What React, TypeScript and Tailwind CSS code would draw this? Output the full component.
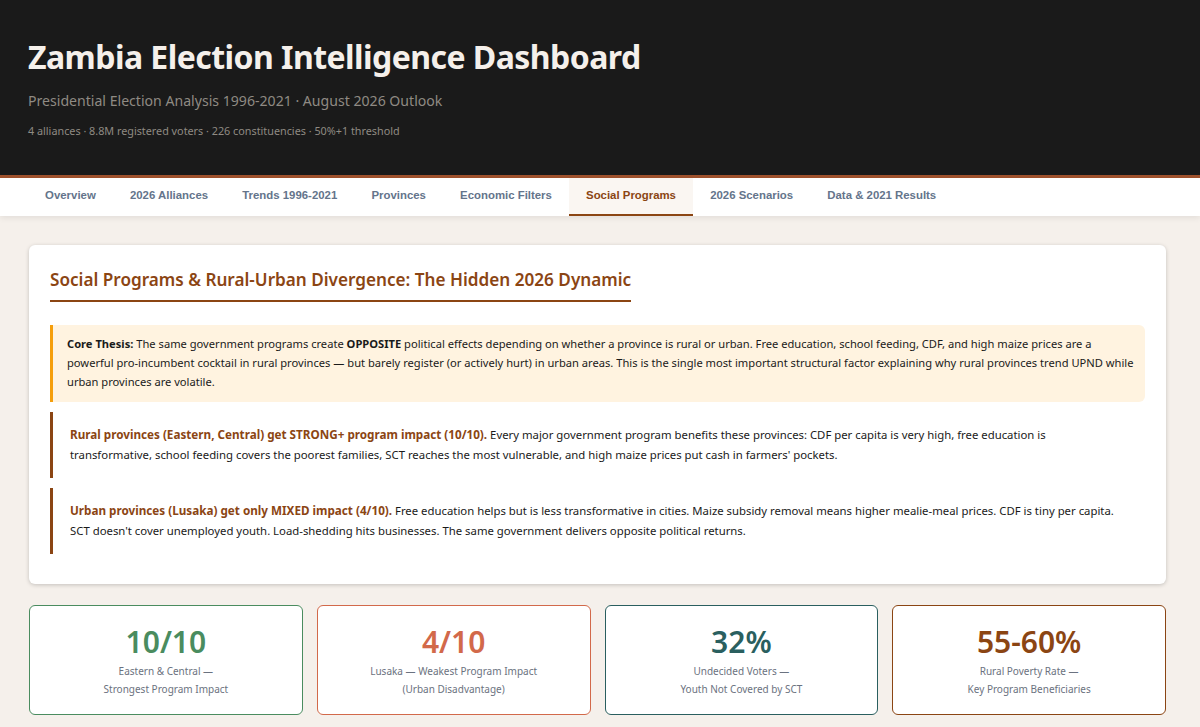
const tabs = [
  "Overview",
  "2026 Alliances",
  "Trends 1996-2021",
  "Provinces",
  "Economic Filters",
  "Social Programs",
  "2026 Scenarios",
  "Data & 2021 Results",
];

const stats = [
  { value: "10/10", lines: ["Eastern & Central —", "Strongest Program Impact"], box: "border-[#4a8c5f]", text: "text-[#4a8c5f]" },
  { value: "4/10", lines: ["Lusaka — Weakest Program Impact", "(Urban Disadvantage)"], box: "border-[#d2694a]", text: "text-[#d2694a]" },
  { value: "32%", lines: ["Undecided Voters —", "Youth Not Covered by SCT"], box: "border-[#2a5f5f]", text: "text-[#2a5f5f]" },
  { value: "55-60%", lines: ["Rural Poverty Rate —", "Key Program Beneficiaries"], box: "border-[#8b4513]", text: "text-[#8b4513]" },
];

export default function App() {
  return (
    <div className="h-[727px] overflow-hidden bg-[#f5f0eb] font-['Noto_Sans',sans-serif] text-[#1a1a1a]">
      <header className="h-[178px] border-b-[3px] border-[#a0522d] bg-[#1a1a1a] px-[28px] pt-[37px]">
        <h1 className="text-[32px] leading-[40px] font-bold tracking-[-0.55px] text-[#f5f0eb]">
          Zambia Election Intelligence Dashboard
        </h1>
        <p className="mt-[14px] text-[14.1px] leading-[20px] text-[#8f8a83]">
          Presidential Election Analysis 1996-2021 · August 2026 Outlook
        </p>
        <p className="mt-[12px] text-[10.8px] leading-[16px] text-[#8f8a83]">
          4 alliances · 8.8M registered voters · 226 constituencies · 50%+1 threshold
        </p>
      </header>

      <nav className="flex h-[38px] bg-white px-[28px] shadow-[0_2px_6px_rgba(0,0,0,0.08)]">
        {tabs.map((tab) => (
          <button
            key={tab}
            className={
              tab === "Social Programs"
                ? "border-b-[2px] border-[#8b4513] bg-[#faf6f2] px-[17.1px] font-['Liberation_Sans',sans-serif] text-[11.4px] font-bold text-[#8b4513]"
                : "border-b-[2px] border-transparent px-[17.1px] font-['Liberation_Sans',sans-serif] text-[11.4px] font-bold text-[#64748b]"
            }
          >
            {tab}
          </button>
        ))}
      </nav>

      <main className="pt-[29px] pr-[34px] pl-[29px]">
        <section className="h-[339px] rounded-[6px] bg-white px-[21px] pt-[22px] shadow-[0_1px_4px_rgba(0,0,0,0.2)]">
          <h2 className="inline-block border-b-[2px] border-[#8b4513] pb-[7px] text-[17.15px] leading-[26px] font-semibold text-[#8b4513]">
            Social Programs &amp; Rural-Urban Divergence: The Hidden 2026 Dynamic
          </h2>

          <div className="mt-[23px] rounded-r-[6px] border-l-[3px] border-[#f59e0b] bg-[#fff3e0] pt-[8.6px] pr-[8px] pb-[10.6px] pl-[14px] text-[11.15px] leading-[19.2px]">
            <strong>Core Thesis:</strong> The same government programs create <strong>OPPOSITE</strong> political effects
            depending on whether a province is rural or urban. Free education, school feeding, CDF, and high maize prices
            are a powerful pro-incumbent cocktail in rural provinces — but barely register (or actively hurt) in urban
            areas. This is the single most important structural factor explaining why rural provinces trend UPND while
            urban provinces are volatile.
          </div>

          <div className="mt-[10px] border-l-[3px] border-[#8b4513] py-[13px] pr-[17px] pl-[17px] text-[11.35px] leading-[20px]">
            <strong className="text-[11.7px] leading-[16px] text-[#8b4513]">Rural provinces (Eastern, Central) get STRONG+ program impact (10/10).</strong>{" "}
            Every major government program benefits these provinces: CDF per capita is very high, free education is
            transformative, school feeding covers the poorest families, SCT reaches the most vulnerable, and high maize
            prices put cash in farmers' pockets.
          </div>

          <div className="mt-[10px] border-l-[3px] border-[#8b4513] py-[13px] pr-[17px] pl-[17px] text-[11.35px] leading-[20px]">
            <strong className="text-[11.7px] leading-[16px] text-[#8b4513]">Urban provinces (Lusaka) get only MIXED impact (4/10).</strong> Free education
            helps but is less transformative in cities. Maize subsidy removal means higher mealie-meal prices. CDF is tiny
            per capita. SCT doesn't cover unemployed youth. Load-shedding hits businesses. The same government delivers
            opposite political returns.
          </div>
        </section>

        <section className="mt-[21px] grid grid-cols-4 gap-[14px]">
          {stats.map((stat) => (
            <div key={stat.value} className={`h-[110px] rounded-[6px] border bg-white pt-[17px] text-center ${stat.box}`}>
              <div className={`mb-[2px] text-[30px] leading-[38px] font-semibold ${stat.text}`}>{stat.value}</div>
              {stat.lines.map((line) => (
                <div key={line} className="text-[10px] leading-[17.6px] text-[#6b7280]">
                  {line}
                </div>
              ))}
            </div>
          ))}
        </section>
      </main>
    </div>
  );
}
